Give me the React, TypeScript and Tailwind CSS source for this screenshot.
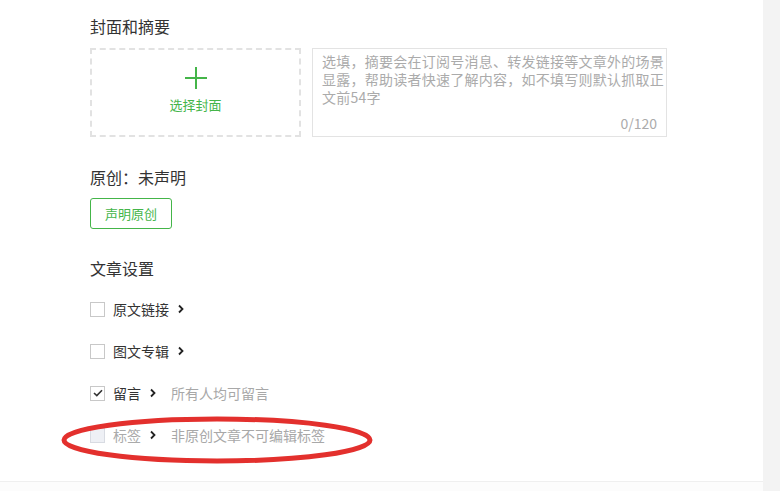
const font = { fontFamily: '"Noto Sans CJK SC", "Liberation Sans", sans-serif' };

const Arrow = () => (
  <svg width="6" height="10" viewBox="0 0 6 10" className="shrink-0">
    <path d="M1 1.5 L4.5 5 L1 8.5" fill="none" stroke="#222" strokeWidth="1.8" />
  </svg>
);

const Check = ({ checked = false, disabled = false }) => (
  <span
    className={`flex h-[15px] w-[15px] shrink-0 items-center justify-center border ${
      disabled ? "border-[#d8dbe2] bg-[#eef0f5]" : "border-[#c8c8c8] bg-white"
    }`}
  >
    {checked && (
      <svg width="10" height="8" viewBox="0 0 10 8">
        <path d="M1 4 L3.8 6.6 L9 1.2" fill="none" stroke="#333" strokeWidth="1.6" />
      </svg>
    )}
  </span>
);

const App = () => {
  const rows = [
    { label: "原文链接" },
    { label: "图文专辑" },
    { label: "留言", checked: true, note: "所有人均可留言" },
    { label: "标签", disabled: true, note: "非原创文章不可编辑标签" },
  ];

  return (
    <div className="flex h-[491px] w-[780px] overflow-hidden bg-[#f3f3f3]" style={font}>
      <div className="relative flex w-[763px] flex-col bg-white">
        <div className="flex-1 pl-[90px] pt-[15px]">
          {/* Cover & summary */}
          <h2 className="text-[16px] leading-[22px] text-[#333]">封面和摘要</h2>
          <div className="mt-[11px] flex gap-[11px]">
            <div className="flex h-[89px] w-[211px] flex-col items-center justify-center border-2 border-dashed border-[#e2e2e2]">
              <svg width="22" height="22" viewBox="0 0 22 22" className="-mt-[4px]">
                <path d="M11 0 V22 M0 11 H22" stroke="#44b549" strokeWidth="2" />
              </svg>
              <span className="mt-[7px] text-[13px] leading-[18px] text-[#44b549]">选择封面</span>
            </div>
            <div className="flex h-[89px] w-[355px] flex-col border border-[#e3e3e3] pt-[3px] pr-0 pb-[4px] pl-[9px]">
              <p className="text-[14px] leading-[18px] tracking-[0.25px] text-[#ababab]">
                选填，摘要会在订阅号消息、转发链接等文章外的场景显露，帮助读者快速了解内容，如不填写则默认抓取正文前54字
              </p>
              <span className="mt-auto self-end pr-[9px] text-[14px] leading-[18px] text-[#ababab]">0/120</span>
            </div>
          </div>

          {/* Original */}
          <h2 className="mt-[29px] text-[16px] leading-[22px] text-[#333]">原创：未声明</h2>
          <button className="mt-[10px] h-[31px] w-[82px] rounded-[3px] border border-[#44b549] text-[13px] text-[#44b549]">
            声明原创
          </button>

          {/* Settings */}
          <h2 className="mt-[28px] text-[16px] leading-[22px] text-[#333]">文章设置</h2>
          <div className="mt-[20px] flex flex-col gap-[22px]">
            {rows.map((row) => (
              <div key={row.label} className="flex h-[20px] items-center">
                <Check checked={row.checked} disabled={row.disabled} />
                <span
                  className={`ml-[8px] text-[14px] leading-[20px] ${row.disabled ? "text-[#aaa]" : "text-[#333]"}`}
                >
                  {row.label}
                </span>
                <span className="ml-[9px] flex items-center">
                  <Arrow />
                </span>
                {row.note && <span className="ml-[15px] text-[14px] leading-[20px] text-[#a8a8a8]">{row.note}</span>}
              </div>
            ))}
          </div>
        </div>
        <div className="h-[10px] border-t border-[#efefef] bg-[#fcfcfc]" />

        {/* annotation ellipse */}
        <svg className="pointer-events-none absolute left-[60px] top-[415px]" width="316" height="52" viewBox="0 0 316 52">
          <ellipse cx="157" cy="25" rx="153" ry="21" fill="none" stroke="#e3302d" strokeWidth="5" />
        </svg>
      </div>
    </div>
  );
};

export default App;
